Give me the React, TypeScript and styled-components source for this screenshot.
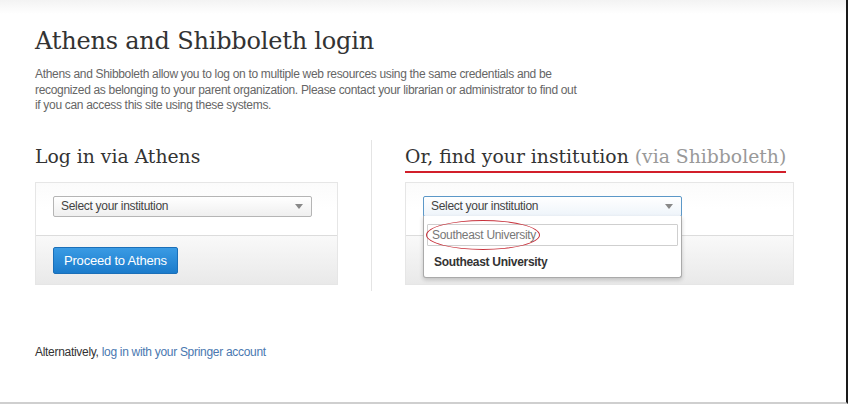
import React from "react";
import styled, { createGlobalStyle } from "styled-components";

const Global = createGlobalStyle`
  html, body { margin: 0; padding: 0; background: #fff; }
  body { font-family: "Liberation Sans", Arial, sans-serif; letter-spacing: -0.3px; }
  * { box-sizing: border-box; }
`;

const Frame = styled.div`
  width: 848px;
  height: 404px;
  background: linear-gradient(#f3f3f3 0px, #fff 14px);
  border-right: 2px solid #1a1a1a;
  border-bottom: 2px solid #cfcfcf;
  padding: 25px 0 0 35px;
  overflow: hidden;
`;

const Title = styled.h1`
  margin: 0;
  font-family: "DejaVu Serif", Georgia, serif;
  font-weight: normal;
  font-size: 24px;
  line-height: 32px;
  color: #333;
  letter-spacing: -0.2px;
`;

const Intro = styled.p`
  margin: 10px 0 0;
  font-size: 12px;
  line-height: 15.5px;
  color: #666;
  letter-spacing: -0.32px;
  white-space: nowrap;
`;

const Columns = styled.div`
  display: grid;
  grid-template-columns: 303px 1px 389px;
  column-gap: 33px;
  margin-top: 30px;
`;

const Column = styled.div`
  display: flex;
  flex-direction: column;
`;

const Divider = styled.div`
  background: #e4e4e4;
  margin-top: -4px;
  height: 151px;
`;

const Heading = styled.h2<{ $underline?: boolean }>`
  margin: 0;
  font-family: "DejaVu Serif", Georgia, serif;
  font-weight: normal;
  font-size: 18.8px;
  line-height: 26px;
  letter-spacing: 0;
  color: #333;
  align-self: flex-start;
  white-space: nowrap;
  padding-bottom: 1px;
  border-bottom: 2px solid ${(p) => (p.$underline ? "#d21f2a" : "transparent")};
`;

const Muted = styled.span`
  color: #999;
`;

const Panel = styled.div`
  margin-top: 9px;
  border: 1px solid #e6e6e6;
  display: flex;
  flex-direction: column;
`;

const PanelTop = styled.div`
  height: 53px;
  padding: 13px 0 0 17px;
  background: linear-gradient(#fbfbfb, #fff 50%);
  border-bottom: 1px solid #dcdcdc;
  position: relative;
`;

const PanelBottom = styled.div`
  height: 48px;
  padding: 11px 0 0 17px;
  background: linear-gradient(#f9f9f9, #e9e9e9);
`;

const SelectBox = styled.div<{ $focus?: boolean }>`
  width: 259px;
  height: 21px;
  border: 1px solid ${(p) => (p.$focus ? "#5c98c8" : "#b5b5b5")};
  border-radius: 2px;
  background: ${(p) =>
    p.$focus ? "linear-gradient(#fff, #eef4fa)" : "linear-gradient(#fff, #efefef)"};
  display: flex;
  align-items: center;
  justify-content: space-between;
  padding: 0 8px 0 7px;
  font-size: 12px;
  color: #444;
  position: relative;
  z-index: 2;
`;

const Arrow = styled.span`
  width: 0;
  height: 0;
  border-left: 4px solid transparent;
  border-right: 4px solid transparent;
  border-top: 5px solid #888;
  margin-top: 1px;
`;

const SelectWrap = styled.div`
  position: relative;
  width: 259px;
`;

const Dropdown = styled.div`
  position: absolute;
  top: 20px;
  left: 0;
  width: 259px;
  height: 62px;
  background: #fff;
  border: 1px solid #aaa;
  border-top: none;
  border-radius: 0 0 3px 3px;
  box-shadow: 0 2px 4px rgba(0, 0, 0, 0.18);
  padding: 8px 3px 0 3px;
  z-index: 3;
`;

const Search = styled.div`
  position: relative;
  height: 22px;
  border: 1px solid #cfcfcf;
  border-radius: 1px;
  font-size: 12px;
  color: #777;
  display: flex;
  align-items: center;
  padding-left: 4px;
`;

const Ellipse = styled.div`
  position: absolute;
  left: -2px;
  top: -5px;
  width: 114px;
  height: 30px;
  border: 1px solid #c8323c;
  border-radius: 50%;
  pointer-events: none;
`;

const Option = styled.div`
  font-size: 12px;
  font-weight: bold;
  color: #333;
  padding: 9px 0 0 7px;
`;

const Button = styled.button`
  height: 27px;
  padding: 0 10px;
  border: 1px solid #1b6fb8;
  border-radius: 2px;
  background: linear-gradient(#3a9be4, #1b7bcb);
  color: #fff;
  font-family: "Liberation Sans", Arial, sans-serif;
  font-size: 13px;
  letter-spacing: -0.2px;
  cursor: pointer;
`;

const Footer = styled.p`
  margin: 54px 0 0;
  font-size: 12px;
  color: #333;
`;

const Link = styled.a`
  color: #4a78b0;
  text-decoration: none;
`;

export default function App() {
  return (
    <>
      <Global />
      <Frame>
        <Title>Athens and Shibboleth login</Title>
        <Intro>
          Athens and Shibboleth allow you to log on to multiple web resources using the same
          credentials and be
          <br />
          recognized as belonging to your parent organization. Please contact your librarian or
          administrator to find out
          <br />
          if you can access this site using these systems.
        </Intro>
        <Columns>
          <Column>
            <Heading>Log in via Athens</Heading>
            <Panel>
              <PanelTop>
                <SelectBox>
                  Select your institution
                  <Arrow />
                </SelectBox>
              </PanelTop>
              <PanelBottom>
                <Button>Proceed to Athens</Button>
              </PanelBottom>
            </Panel>
          </Column>
          <Divider />
          <Column>
            <Heading $underline>
              Or, find your institution <Muted>(via Shibboleth)</Muted>
            </Heading>
            <Panel>
              <PanelTop>
                <SelectWrap>
                  <SelectBox $focus>
                    Select your institution
                    <Arrow />
                  </SelectBox>
                  <Dropdown>
                    <Search>
                      Southeast University
                      <Ellipse />
                    </Search>
                    <Option>Southeast University</Option>
                  </Dropdown>
                </SelectWrap>
              </PanelTop>
              <PanelBottom />
            </Panel>
          </Column>
        </Columns>
        <Footer>
          Alternatively, <Link href="#">log in with your Springer account</Link>
        </Footer>
      </Frame>
    </>
  );
}
